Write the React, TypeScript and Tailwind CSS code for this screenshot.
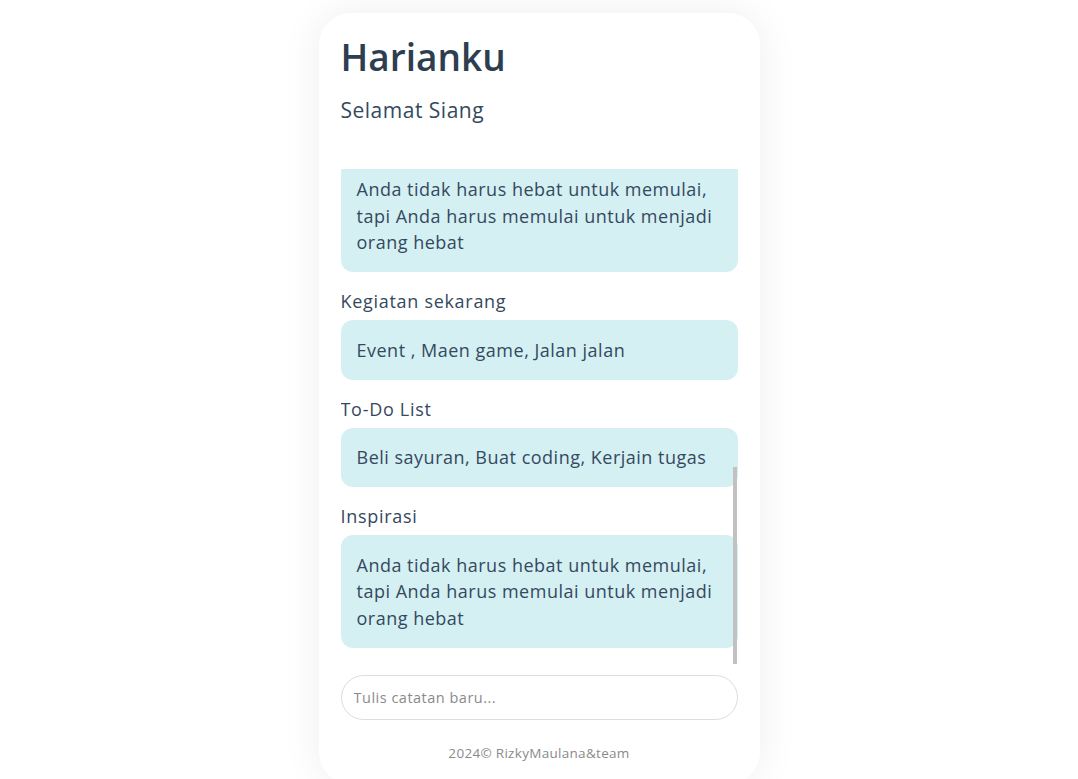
import React, { useLayoutEffect, useRef } from "react";

const quote = "Anda tidak harus hebat untuk memulai, tapi Anda harus memulai untuk menjadi orang hebat";

const sections = [
  { label: "Kegiatan sekarang", text: "Event , Maen game, Jalan jalan" },
  { label: "To-Do List", text: "Beli sayuran, Buat coding, Kerjain tugas" },
  { label: "Inspirasi", text: quote },
  { label: "Kegiatan sekarang", text: "Event , Maen game, Jalan jalan" },
  { label: "To-Do List", text: "Beli sayuran, Buat coding, Kerjain tugas" },
  { label: "Inspirasi", text: quote },
  { label: "Kegiatan sekarang", text: "Event , Maen game, Jalan jalan" },
  { label: "To-Do List", text: "Beli sayuran, Buat coding, Kerjain tugas" },
  { label: "Inspirasi", text: quote },
];

export default function App() {
  const ref = useRef<HTMLDivElement>(null);
  useLayoutEffect(() => {
    if (ref.current) ref.current.scrollTop = ref.current.scrollHeight;
  }, []);

  return (
    <div className="min-h-screen bg-white pt-[13px] font-['Open_Sans',_sans-serif]">
      <div className="mx-auto flex h-[771px] w-[441px] flex-col rounded-[32px] bg-white px-[22px] pt-[22px] shadow-[0_0_40px_rgba(0,0,0,0.07)]">
        <h1 className="text-[37px] font-semibold leading-[43px] text-[#2c3e50]">Harianku</h1>
        <p className="mt-[17px] text-[21px] leading-[30px] tracking-[0.5px] text-[#34495e]">Selamat Siang</p>

        <div className="relative mt-[44px] h-[495px]">
          <div ref={ref} className="h-full overflow-y-auto [scrollbar-width:none]">
            {sections.map((s, i) => (
              <div key={i}>
                <div className="mb-[5px] text-[18px] leading-[27px] tracking-[0.7px] text-[#34495e]">{s.label}</div>
                <div className="mb-[16px] rounded-[12px] bg-[#d4f0f3] px-[16px] py-[16.5px] text-[18px] leading-[26.5px] tracking-[0.5px] text-[#34495e]">
                  {s.text}
                </div>
              </div>
            ))}
          </div>
          <div className="absolute bottom-0 right-[1px] h-[197px] w-[4px] bg-[#c1c1c1]" />
        </div>

        <input
          className="mt-[11px] h-[45px] w-full rounded-full border border-[#dddddd] px-[12px] text-[14.5px] tracking-[0.5px] text-[#34495e] outline-none placeholder:text-[#8a8a8a]"
          placeholder="Tulis catatan baru..."
        />

        <p className="mt-[23px] text-center text-[13.5px] leading-[20px] tracking-[0.3px] text-[#8a8a8a]">2024© RizkyMaulana&amp;team</p>
      </div>
    </div>
  );
}
